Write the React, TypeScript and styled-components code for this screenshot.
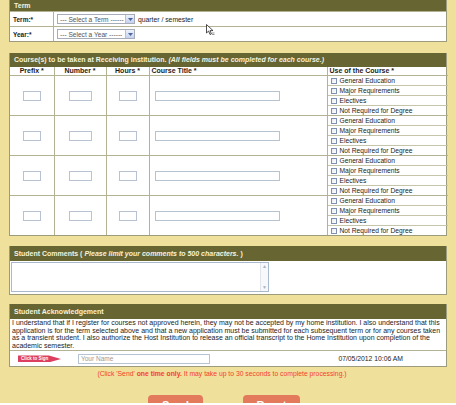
import React from "react";
import styled, { createGlobalStyle } from "styled-components";

const GlobalStyle = createGlobalStyle`
  html, body {
    margin: 0;
    padding: 0;
    background: #ffffff;
  }
  body {
    font-family: "Liberation Sans", Arial, sans-serif;
  }
`;

const line = "#b3b292";

const Page = styled.div`
  position: relative;
  height: 403px;
  overflow: hidden;
  box-sizing: border-box;
  padding: 0 9px;
  background: #efe09c;
  color: #1c1c1c;
`;

const Panel = styled.section<{ $gap?: number }>`
  background: #fff;
  border: 1px solid #9c9b7b;
  border-top: none;
  margin-bottom: ${(p) => p.$gap ?? 0}px;
`;

const Header = styled.div<{ $h: number }>`
  height: ${(p) => p.$h}px;
  line-height: ${(p) => p.$h}px;
  background: #676633;
  color: #f5f2de;
  font-size: 7px;
  font-weight: bold;
  padding-left: 4px;
  white-space: nowrap;
  i {
    font-style: italic;
  }
`;

const TermRow = styled.div`
  display: grid;
  grid-template-columns: 44px 1fr;
  height: 14px;
  border-top: 1px solid ${line};
`;

const TermLabel = styled.div`
  border-right: 1px solid ${line};
  font-size: 6.5px;
  font-weight: bold;
  display: flex;
  align-items: center;
  padding-left: 3px;
`;

const TermField = styled.div`
  display: flex;
  align-items: center;
  gap: 3px;
  padding-left: 3px;
  font-size: 6.8px;
`;

const Select = styled.div`
  width: 78px;
  height: 10px;
  box-sizing: border-box;
  border: 1px solid #a6adb8;
  display: flex;
  align-items: center;
  justify-content: space-between;
  color: #555;
  font-size: 6.6px;
  padding-left: 2px;
  background: #fff;
`;

const SelectArrow = styled.span`
  width: 8px;
  height: 8px;
  background: linear-gradient(#eef3fc, #c4d2ee);
  border-left: 1px solid #b4c2dc;
  display: flex;
  align-items: center;
  justify-content: center;
  svg {
    width: 5px;
    height: 3px;
  }
`;

const Table = styled.table`
  width: 100%;
  border-collapse: collapse;
  table-layout: fixed;
  tr > *:first-child {
    border-left: none;
  }
  tr > *:last-child {
    border-right: none;
  }
  tr:last-child > td {
    border-bottom: none;
  }
`;

const Th = styled.th<{ $align?: "left" | "center" }>`
  height: 8px;
  padding: 0 2px;
  border: 1px solid ${line};
  border-top: none;
  font-size: 7px;
  font-weight: bold;
  line-height: 8px;
  text-align: ${(p) => p.$align ?? "center"};
  white-space: nowrap;
`;

const Td = styled.td<{ $align?: "left" | "center" }>`
  height: 39px;
  padding: 0;
  border: 1px solid ${line};
  text-align: ${(p) => p.$align ?? "center"};
  vertical-align: middle;
`;

const TextInput = styled.input<{ $w: number }>`
  width: ${(p) => p.$w}px;
  height: 10px;
  box-sizing: border-box;
  border: 1px solid #b7c3d3;
  padding: 0 2px;
  font-family: inherit;
  font-size: 6.5px;
  vertical-align: middle;
  &::placeholder {
    color: #9a9a9a;
  }
`;

const TitleCell = styled(Td)`
  padding-left: 5px;
`;

const UseList = styled.div`
  display: flex;
  flex-direction: column;
  height: 39px;
`;

const UseItem = styled.label`
  flex: 1;
  display: flex;
  align-items: center;
  gap: 3px;
  padding-left: 3px;
  font-size: 6.7px;
  border-bottom: 1px solid #c6c5a9;
  &:last-child {
    border-bottom: none;
  }
`;

const Box = styled.span`
  width: 6px;
  height: 6px;
  box-sizing: border-box;
  border: 1px solid #7d90b0;
  background: linear-gradient(135deg, #e6eaf1, #ffffff);
`;

const CommentBody = styled.div`
  height: 33px;
  padding: 1px 0 0 1px;
  box-sizing: border-box;
`;

const TextArea = styled.div`
  width: 258px;
  height: 30px;
  box-sizing: border-box;
  border: 1px solid #a9b8cc;
  display: flex;
  justify-content: flex-end;
`;

const ScrollBar = styled.div`
  width: 7px;
  border-left: 1px solid #e2e6ec;
  display: flex;
  flex-direction: column;
  justify-content: space-between;
  align-items: center;
  color: #a8b2c2;
  font-size: 5px;
  line-height: 7px;
  background: #f7f8fa;
`;

const AckText = styled.p`
  margin: 0;
  padding: 0 2px 1px 2px;
  font-size: 7px;
  line-height: 7.6px;
  white-space: nowrap;
`;

const SignRow = styled.div`
  height: 15px;
  border-top: 1px solid ${line};
  display: flex;
  align-items: center;
  padding-left: 8px;
`;

const SignBadge = styled.span`
  width: 43px;
  height: 7px;
  background: #dc3f5f;
  color: #fff;
  font-size: 4.5px;
  font-weight: bold;
  line-height: 7px;
  padding-left: 3px;
  box-sizing: border-box;
  clip-path: polygon(0 0, 72% 0, 100% 50%, 72% 100%, 0 100%);
  margin-right: 17px;
`;

const Stamp = styled.span`
  margin-left: auto;
  margin-right: 43px;
  font-size: 6.8px;
`;

const Notice = styled.p`
  margin: 3px 0 0;
  padding-right: 12px;
  text-align: center;
  font-size: 6.8px;
  line-height: 8px;
  color: #f5402c;
  b {
    font-weight: bold;
  }
`;

const Actions = styled.div`
  display: flex;
  justify-content: center;
  gap: 40px;
  margin-top: 17px;
  padding-right: 8px;
`;

const Button = styled.button<{ $w: number }>`
  width: ${(p) => p.$w}px;
  height: 20px;
  border: none;
  border-radius: 4px;
  background: #e27a5b;
  color: #fff;
  font-family: inherit;
  font-size: 11px;
  font-weight: bold;
  line-height: 20px;
  padding: 0;
`;

const Cursor = styled.svg`
  position: absolute;
  left: 206px;
  top: 24px;
  width: 9px;
  height: 12px;
`;

const uses = ["General Education", "Major Requirements", "Electives", "Not Required for Degree"];

function Arrow() {
  return (
    <SelectArrow>
      <svg viewBox="0 0 5 3">
        <path d="M0 0 L5 0 L2.5 3 Z" fill="#4a64a0" />
      </svg>
    </SelectArrow>
  );
}

function CourseRow() {
  return (
    <tr>
      <Td>
        <TextInput $w={18} />
      </Td>
      <Td>
        <TextInput $w={23} />
      </Td>
      <Td>
        <TextInput $w={18} />
      </Td>
      <TitleCell $align="left">
        <TextInput $w={125} />
      </TitleCell>
      <Td $align="left">
        <UseList>
          {uses.map((u) => (
            <UseItem key={u}>
              <Box />
              {u}
            </UseItem>
          ))}
        </UseList>
      </Td>
    </tr>
  );
}

export default function App() {
  return (
    <Page>
      <GlobalStyle />
      <Panel $gap={11}>
        <Header $h={11}>Term</Header>
        <TermRow>
          <TermLabel>Term:*</TermLabel>
          <TermField>
            <Select>
              --- Select a Term ------
              <Arrow />
            </Select>
            quarter / semester
          </TermField>
        </TermRow>
        <TermRow>
          <TermLabel>Year:*</TermLabel>
          <TermField>
            <Select>
              --- Select a Year ------
              <Arrow />
            </Select>
          </TermField>
        </TermRow>
      </Panel>

      <Panel $gap={10}>
        <Header $h={14}>
          Course(s) to be taken at Receiving institution. <i>(All fields must be completed for each course.)</i>
        </Header>
        <Table>
          <colgroup>
            <col style={{ width: 44 }} />
            <col style={{ width: 52 }} />
            <col style={{ width: 43 }} />
            <col style={{ width: 178 }} />
            <col style={{ width: 121 }} />
          </colgroup>
          <thead>
            <tr>
              <Th>Prefix *</Th>
              <Th>Number *</Th>
              <Th>Hours *</Th>
              <Th $align="left">Course Title *</Th>
              <Th $align="left">Use of the Course *</Th>
            </tr>
          </thead>
          <tbody>
            <CourseRow />
            <CourseRow />
            <CourseRow />
            <CourseRow />
          </tbody>
        </Table>
      </Panel>

      <Panel $gap={9}>
        <Header $h={15}>
          Student Comments ( <i>Please limit your comments to 500 characters.</i> )
        </Header>
        <CommentBody>
          <TextArea>
            <ScrollBar>
              <span>▲</span>
              <span>▼</span>
            </ScrollBar>
          </TextArea>
        </CommentBody>
      </Panel>

      <Panel>
        <Header $h={15}>Student Acknowledgement</Header>
        <AckText>
          I understand that if I register for courses not approved herein, they may not be accepted by my home institution. I also understand that this
          <br />
          application is for the term selected above and that a new application must be submitted for each subsequent term or for any courses taken
          <br />
          as a transient student. I also authorize the Host Institution to release an official transcript to the Home Institution upon completion of the
          <br />
          academic semester.
        </AckText>
        <SignRow>
          <SignBadge>Click to Sign</SignBadge>
          <TextInput $w={132} placeholder="Your Name" />
          <Stamp>07/05/2012 10:06 AM</Stamp>
        </SignRow>
      </Panel>

      <Notice>
        (Click 'Send' <b>one time only.</b> It may take up to 30 seconds to complete processing.)
      </Notice>

      <Actions>
        <Button $w={55}>Send</Button>
        <Button $w={57}>Reset</Button>
      </Actions>

      <Cursor viewBox="0 0 9 12">
        <path d="M0.5 0.5 L0.5 9 L2.6 7 L4 10.5 L5.4 9.9 L4 6.6 L7 6.6 Z" fill="#fff" stroke="#222" strokeWidth="0.8" />
        <path d="M6 9 h2.5 M6 10.5 h2.5" stroke="#555" strokeWidth="0.6" />
      </Cursor>
    </Page>
  );
}
